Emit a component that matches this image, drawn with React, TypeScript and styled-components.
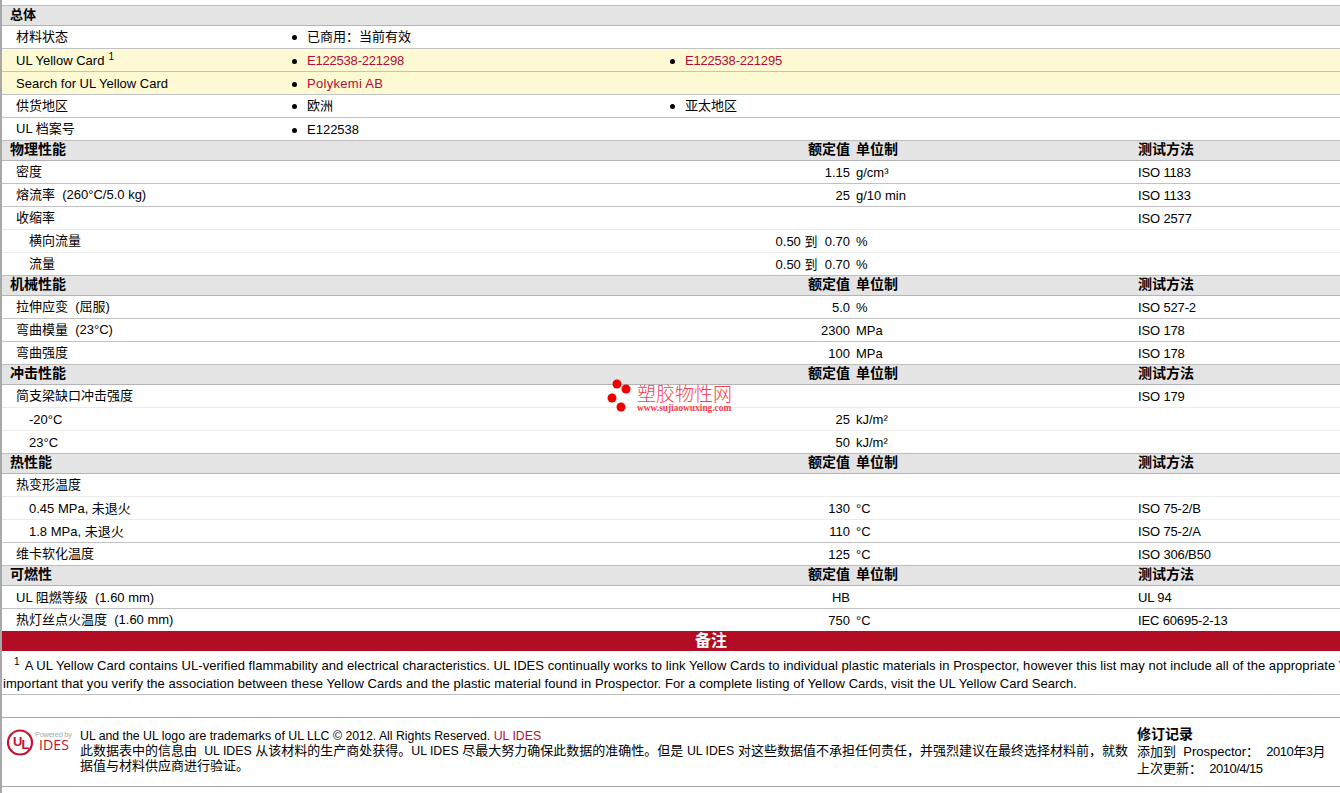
import React from "react";
import styled, { createGlobalStyle } from "styled-components";

const Global = createGlobalStyle`
  html, body { margin: 0; padding: 0; background: #fff; overflow: hidden; }
  body { font-family: "Liberation Sans", "Noto Sans CJK SC", sans-serif; font-size: 13px; color: #000; }
`;

const Page = styled.div`
  position: relative;
  width: 1340px;
  height: 793px;
  box-sizing: border-box;
  border-left: 2px solid #a8a8a8;
  padding-top: 5px;
  overflow: hidden;
  background: #fff;
`;

const SectionHead = styled.div`
  display: grid;
  grid-template-columns: 848px 6px 282px 1fr;
  height: 21px;
  margin-top: -1px;
  box-sizing: border-box;
  border-top: 1px solid #bdbdbd;
  border-bottom: 1px solid #b4b4b8;
  background-color: #e4e4e4;
  background-image: radial-gradient(#ececec 0.6px, transparent 0.7px);
  background-size: 6px 4px;
  font-weight: 700;
  font-size: 14px;
  line-height: 17px;
  &:first-child { margin-top: 0; }
`;

const HeadTitle = styled.div`
  display: flex;
  justify-content: space-between;
  padding-left: 8px;
`;

const FirstTitle = styled.span`
  font-size: 13px;
  line-height: 18px;
`;

const Row = styled.div<{ $tint?: boolean; $light?: boolean }>`
  display: grid;
  height: 23px;
  box-sizing: border-box;
  line-height: 24px;
  border-bottom: 1px solid ${(p) => (p.$light ? "#ebebeb" : "#c2c2c6")};
  background: ${(p) => (p.$tint ? "#fdf9d2" : "#fff")};
  white-space: nowrap;
`;

const GeneralRow = styled(Row)`
  grid-template-columns: 290px 378px 1fr;
`;

const DataRow = styled(Row)`
  grid-template-columns: 848px 6px 282px 1fr;
`;

const Label = styled.div<{ $cjk?: boolean }>`
  padding-left: 14px;
  line-height: ${(p) => (p.$cjk ? 22 : 24)}px;
`;

const NameValue = styled.div<{ $indent?: boolean }>`
  display: flex;
  justify-content: space-between;
  padding-left: ${(p) => (p.$indent ? 27 : 14)}px;
`;

const Name = styled.span<{ $cjk?: boolean }>`
  white-space: pre;
  line-height: ${(p) => (p.$cjk ? 22 : 24)}px;
`;

const Method = styled.span`
  letter-spacing: -0.15px;
`;

const Sup = styled.sup`
  font-size: 10px;
  line-height: 0;
  margin-left: 4px;
  vertical-align: 5px;
`;

const Bullet = styled.div<{ $cjk?: boolean }>`
  display: flex;
  align-items: center;
  gap: 10px;
  line-height: ${(p) => (p.$cjk ? 22 : 24)}px;
  &::before {
    content: "";
    width: 5px;
    height: 5px;
    border-radius: 50%;
    background: #000;
    flex: none;
  }
`;

const RedLink = styled.span<{ $spacing?: string }>`
  color: #b30c36;
  letter-spacing: ${(p) => p.$spacing ?? "0"};
`;

const Band = styled.div`
  height: 20px;
  margin-top: -1px;
  padding-left: 80px;
  background: #b30c25;
  color: #fff;
  font-weight: 700;
  font-size: 16px;
  line-height: 20px;
  text-align: center;
`;

const Notes = styled.div`
  height: 44px;
  box-sizing: border-box;
  padding: 6px 0 0 1px;
  border-bottom: 1px solid #bcbcbc;
  line-height: 18px;
  letter-spacing: 0.05px;
  white-space: nowrap;
  overflow: hidden;
`;

const NoteSup = styled.sup`
  font-size: 10px;
  line-height: 0;
  margin: 0 5px 0 11px;
  vertical-align: 5px;
`;

const Spacer = styled.div`
  height: 23px;
  box-sizing: border-box;
  border-bottom: 1px solid #a8a8a8;
`;

const Footer = styled.div`
  display: grid;
  grid-template-columns: 78px 1057px 1fr;
  height: 69px;
  box-sizing: border-box;
  border-bottom: 1px solid #a8a8a8;
  padding-top: 10px;
`;

const Logo = styled.svg`
  display: block;
  margin: 1px 0 0 4px;
`;

const FooterText = styled.div`
  line-height: 15px;
  white-space: pre;
`;

const Latin = styled.span`
  font-size: 12.3px;
  line-height: 0;
`;

const Revision = styled.div`
  line-height: 17px;
  white-space: pre;
  margin-top: -2px;
`;

const RevisionTitle = styled.div`
  font-weight: 700;
  font-size: 14px;
`;

const Tight = styled.span`
  letter-spacing: -0.5px;
`;

const Watermark = styled.div`
  position: absolute;
  left: 603px;
  top: 378px;
  display: flex;
  gap: 2px;
  color: #f4404c;
  pointer-events: none;
`;

const WatermarkText = styled.div`
  display: flex;
  flex-direction: column;
  padding-top: 5px;
`;

const WatermarkTitle = styled.div`
  font-size: 19px;
  line-height: 24px;
  font-weight: 300;
`;

const WatermarkUrl = styled.div`
  font-family: "Liberation Serif", serif;
  font-size: 9.4px;
  line-height: 9px;
  font-weight: 700;
  margin-top: -3px;
  white-space: nowrap;
`;

type D = { n: string; v?: string; u?: string; m?: string; i?: boolean; l?: boolean };
type S = { title: string; rows: D[] };

const sections: S[] = [
  {
    title: "物理性能",
    rows: [
      { n: "密度", v: "1.15", u: "g/cm³", m: "ISO 1183" },
      { n: "熔流率  (260°C/5.0 kg)", v: "25", u: "g/10 min", m: "ISO 1133" },
      { n: "收缩率", m: "ISO 2577", l: true },
      { n: "横向流量", v: "0.50 到  0.70", u: "%", i: true, l: true },
      { n: "流量", v: "0.50 到  0.70", u: "%", i: true, l: true },
    ],
  },
  {
    title: "机械性能",
    rows: [
      { n: "拉伸应变  (屈服)", v: "5.0", u: "%", m: "ISO 527-2" },
      { n: "弯曲模量  (23°C)", v: "2300", u: "MPa", m: "ISO 178" },
      { n: "弯曲强度", v: "100", u: "MPa", m: "ISO 178" },
    ],
  },
  {
    title: "冲击性能",
    rows: [
      { n: "简支梁缺口冲击强度", m: "ISO 179", l: true },
      { n: "-20°C", v: "25", u: "kJ/m²", i: true, l: true },
      { n: "23°C", v: "50", u: "kJ/m²", i: true, l: true },
    ],
  },
  {
    title: "热性能",
    rows: [
      { n: "热变形温度", l: true },
      { n: "0.45 MPa, 未退火", v: "130", u: "°C", m: "ISO 75-2/B", i: true, l: true },
      { n: "1.8 MPa, 未退火", v: "110", u: "°C", m: "ISO 75-2/A", i: true },
      { n: "维卡软化温度", v: "125", u: "°C", m: "ISO 306/B50" },
    ],
  },
  {
    title: "可燃性",
    rows: [
      { n: "UL 阻燃等级  (1.60 mm)", v: "HB", m: "UL 94" },
      { n: "热灯丝点火温度  (1.60 mm)", v: "750", u: "°C", m: "IEC 60695-2-13" },
    ],
  },
];

const Pre = styled.span`
  white-space: pre;
`;

const isCjk = (t: string) => !/[\x00-\x7f]/.test(t);

export default function App() {
  return (
    <Page>
      <Global />
      <SectionHead>
        <HeadTitle>
          <FirstTitle>总体</FirstTitle>
        </HeadTitle>
      </SectionHead>
      <GeneralRow>
        <Label $cjk>材料状态</Label>
        <Bullet $cjk>已商用：当前有效</Bullet>
      </GeneralRow>
      <GeneralRow $tint>
        <Label>
          UL Yellow Card<Sup>1</Sup>
        </Label>
        <Bullet>
          <RedLink $spacing="-0.2px">E122538-221298</RedLink>
        </Bullet>
        <Bullet>
          <RedLink $spacing="-0.2px">E122538-221295</RedLink>
        </Bullet>
      </GeneralRow>
      <GeneralRow $tint>
        <Label>Search for UL Yellow Card</Label>
        <Bullet>
          <RedLink $spacing="0.3px">Polykemi AB</RedLink>
        </Bullet>
      </GeneralRow>
      <GeneralRow>
        <Label $cjk>供货地区</Label>
        <Bullet $cjk>欧洲</Bullet>
        <Bullet $cjk>亚太地区</Bullet>
      </GeneralRow>
      <GeneralRow>
        <Label $cjk>UL 档案号</Label>
        <Bullet>E122538</Bullet>
      </GeneralRow>

      {sections.map((s) => (
        <React.Fragment key={s.title}>
          <SectionHead>
            <HeadTitle>
              <span>{s.title}</span>
              <span>额定值</span>
            </HeadTitle>
            <span />
            <span>单位制</span>
            <span>测试方法</span>
          </SectionHead>
          {s.rows.map((r) => (
            <DataRow key={r.n} $light={r.l}>
              <NameValue $indent={r.i}>
                <Name $cjk={isCjk(r.n) || r.n.startsWith("熔") || r.n.startsWith("热灯") || r.n.startsWith("拉") || r.n.startsWith("弯")}>{r.n}</Name>
                <Pre>{r.v}</Pre>
              </NameValue>
              <span />
              <span>{r.u}</span>
              <Method>{r.m}</Method>
            </DataRow>
          ))}
        </React.Fragment>
      ))}

      <Band>备注</Band>
      <Notes>
        <NoteSup>1</NoteSup>A UL Yellow Card contains UL-verified flammability and electrical characteristics. UL IDES
        continually works to link Yellow Cards to individual plastic materials in Prospector, however this list may not
        include all of the appropriate Yellow Cards. It is
        <br />
        important that you verify the association between these Yellow Cards and the plastic material found in
        Prospector. For a complete listing of Yellow Cards, visit the UL Yellow Card Search.
      </Notes>
      <Spacer />
      <Footer>
        <Logo width="66" height="30" viewBox="0 0 66 30">
          <circle cx="14" cy="13.5" r="12" fill="none" stroke="#c8102e" strokeWidth="2.2" />
          <text x="7" y="17" fontFamily="Liberation Sans" fontSize="13" fontWeight="700" fill="#c8102e">
            U
          </text>
          <text x="15.5" y="20" fontFamily="Liberation Sans" fontSize="13" fontWeight="700" fill="#c8102e">
            L
          </text>
          <text x="29" y="8" fontFamily="Liberation Sans" fontSize="7.5" fill="#aaa" textLength="37">
            Powered by
          </text>
          <text x="33" y="21" fontFamily="Open Sans" fontSize="14" fill="#c8102e" textLength="30" lengthAdjust="spacingAndGlyphs">
            IDES
          </text>
        </Logo>
        <FooterText>
          <Latin>
            UL and the UL logo are trademarks of UL LLC © 2012. All Rights Reserved. <RedLink>UL IDES</RedLink>
          </Latin>
          {"\n"}此数据表中的信息由  <Latin>UL IDES</Latin> 从该材料的生产商处获得。<Latin>UL IDES</Latin> 尽最大努力确保此数据的准确性。但是 <Latin>UL IDES</Latin> 对这些数据值不承担任何责任，并强烈建议在最终选择材料前，就数
          {"\n"}据值与材料供应商进行验证。
        </FooterText>
        <Revision>
          <RevisionTitle>修订记录</RevisionTitle>
          <div>
            添加到  Prospector：  <Tight>2010年3月</Tight>
          </div>
          <div>
            上次更新：  <Tight>2010/4/15</Tight>
          </div>
        </Revision>
      </Footer>

      <Watermark>
        <svg width="30" height="34" viewBox="0 0 30 34">
          <g fill="#f00000">
            <circle cx="12" cy="6" r="4.5" />
            <circle cx="21" cy="11" r="4.5" />
            <circle cx="7" cy="20" r="4.5" />
            <circle cx="16" cy="29" r="4.5" />
          </g>
        </svg>
        <WatermarkText>
          <WatermarkTitle>塑胶物性网</WatermarkTitle>
          <WatermarkUrl>www.sujiaowuxing.com</WatermarkUrl>
        </WatermarkText>
      </Watermark>
    </Page>
  );
}
